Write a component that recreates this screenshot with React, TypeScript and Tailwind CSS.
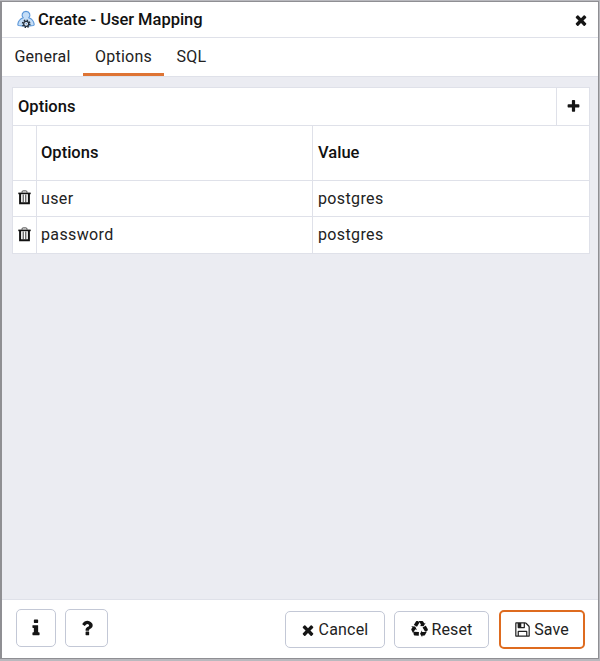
import React from "react";

const TIMES =
  "M1490 1322q0 40-28 68l-136 136q-28 28-68 28t-68-28l-294-294-294 294q-28 28-68 28t-68-28l-136-136q-28-28-28-68t28-68l294-294-294-294q-28-28-28-68t28-68l136-136q28-28 68-28t68 28l294 294 294-294q28-28 68-28t68 28l136 136q28 28 28 68t-28 68l-294 294 294 294q28 28 28 68z";
const PLUS =
  "M1600 736v192q0 40-28 68t-68 28h-416v416q0 40-28 68t-68 28h-192q-40 0-68-28t-28-68v-416h-416q-40 0-68-28t-28-68v-192q0-40 28-68t68-28h416v-416q0-40 28-68t68-28h192q40 0 68 28t28 68v416h416q40 0 68 28t28 68z";
const FLOPPY =
  "M512 1536h768v-384h-768v384zm896 0h128v-896q0-14-10-38.5t-20-34.5l-281-281q-10-10-34-20t-39-10v416q0 40-28 68t-68 28h-576q-40 0-68-28t-28-68v-416h-128v1280h128v-416q0-40 28-68t68-28h832q40 0 68 28t28 68v416zm-384-928v-320q0-13-9.5-22.5t-22.5-9.5h-192q-13 0-22.5 9.5t-9.5 22.5v320q0 13 9.5 22.5t22.5 9.5h192q13 0 22.5-9.5t9.5-22.5zm640 32v928q0 40-28 68t-68 28h-1344q-40 0-68-28t-28-68v-1344q0-40 28-68t68-28h928q40 0 88 20t76 48l280 280q28 28 48 76t20 88z";
const INFO =
  "M1216 1344v128q0 26-19 45t-45 19h-512q-26 0-45-19t-19-45v-128q0-26 19-45t45-19h64v-384h-64q-26 0-45-19t-19-45v-128q0-26 19-45t45-19h384q26 0 45 19t19 45v576h64q26 0 45 19t19 45zm-128-1152v192q0 26-19 45t-45 19h-256q-26 0-45-19t-19-45v-192q0-26 19-45t45-19h256q26 0 45 19t19 45z";
const QUESTION =
  "M1088 1256v240q0 16-12 28t-28 12h-240q-16 0-28-12t-12-28v-240q0-16 12-28t28-12h240q16 0 28 12t12 28zm316-600q0 54-15.5 101t-35 76.5-55 59.5-57.5 43.5-61 35.5q-41 23-68.5 65t-27.5 67q0 17-12 32.5t-28 15.5h-240q-15 0-25.5-18.5t-10.5-37.5v-45q0-83 65-156.5t143-108.5q59-27 84-56t25-76q0-42-46.5-74t-107.5-32q-65 0-108 29-35 25-107 115-13 16-31 16-12 0-25-8l-164-125q-13-10-15.5-25t5.5-28q160-266 464-266 80 0 161 31t146 83 106 127.5 41 158.5z";
const RECYCLE =
  "M836 1169l-15 368-2 22-420-29q-36-3-67-31.5t-47-65.5q-11-27-14.5-55t4-65 12-55 21.5-64 19-53q78 12 509 28zm-387-586l180 379-147-92q-63 72-111.5 144.5t-72.5 125-39.5 94.5-18.5 63l-4 21-190-357q-17-26-18-56t6-47l8-18q35-63 114-188l-140-86zm1231 517l-188 359q-12 29-36.5 46.5t-43.5 20.5l-18 4q-71 7-219 12l8 164-230-367 211-362 7 173q170 16 283 5t170-33zm-785-924q-47 63-265 435l-317-187-19-12 225-356q20-31 60-45t80-10q24 2 48.5 12t42 21 41.5 33 36 34.5 36 39.5 32 35zm655 307l212 363q18 37 12.5 76t-27.5 74q-13 20-33 37t-38 28-48.5 22-47 16-51.5 14-46 12q-34-72-265-436l313-195zm-143-226l142-83-220 373-419-20 151-86q-34-89-75-166t-75.5-123.5-64.5-80-47-46.5l-17-13 405 1q31-3 58 10.5t39 28.5l11 15q39 61 112 190z";

function Icon({ d, className }: { d: string; className: string }) {
  return (
    <svg viewBox="0 0 1792 1792" fill="currentColor" className={`shrink-0 ${className}`}>
      <path d={d} />
    </svg>
  );
}

function UserMappingIcon() {
  return (
    <svg viewBox="0 0 18 18" className="mb-0.5 h-[18px] w-[18px] shrink-0">
      <path
        d="M6.2 7.8C3.3 8.8 1.2 11.4.8 14.4q-.1.9.8 1.1 7.4 1 14.8 0 .9-.2.8-1.1C16.8 11.4 14.7 8.8 11.8 7.8 14 5.4 12.8 1.4 9 1.4S4 5.4 6.2 7.8z"
        fill="#c5def7"
        stroke="#5b96d8"
        strokeWidth="1.1"
      />
      <circle cx="9.2" cy="13.8" r="3.6" fill="none" stroke="#222e3c" strokeWidth="1.5" strokeDasharray="1.4 1.43" />
      <circle cx="9.2" cy="13.8" r="2.5" fill="#eef5fd" stroke="#222e3c" strokeWidth="1.3" />
      <circle cx="9.2" cy="13.8" r=".7" fill="#4f8bd0" />
    </svg>
  );
}

function TrashIcon() {
  return (
    <svg viewBox="0 0 13 15" fill="none" stroke="#111111" className="mb-0.5 h-[15px] w-[13px] shrink-0">
      <path d="M4 2.6V1.9Q4 .9 5.1.9h2.8Q9 .9 9 1.9v.7" stroke="#444444" strokeWidth="1" />
      <path d="M.3 3.4h12.4" strokeWidth="1.6" />
      <path d="M2.1 3.5v9.8h8.8V3.5" strokeWidth="2" />
      <path d="M5.2 4.5v8M7.8 4.5v8" stroke="#333333" strokeWidth="1" />
    </svg>
  );
}

const rows = [
  { option: "user", value: "postgres" },
  { option: "password", value: "postgres" },
];

export default function App() {
  return (
    <div className="h-[661px] w-[600px] bg-[#b9b9be] pt-px font-['Roboto',sans-serif] text-base text-[#222222]">
      <div className="flex h-[658px] w-[599px] flex-col border-y border-r border-l-2 border-[#8f8f93] bg-[#ebecf2]">
        <header className="flex h-9 items-center border-b border-[#dfe1e9] bg-white pr-[9px] pl-[15px]">
          <UserMappingIcon />
          <h1 className="ml-[3px] flex-1 text-[16.5px] leading-6 font-medium tracking-[-0.02px] text-[#111111]">Create - User Mapping</h1>
          <button aria-label="Close"><Icon d={TIMES} className="h-4 w-4 text-[#151515]" /></button>
        </header>
        <nav className="flex h-[39px] border-b border-[#dfe1e9] bg-white tracking-[0.25px]">
          <button className="w-[81px] pb-px">General</button>
          <button className="w-[81px] border-b-[3px] border-[#de7434] pt-0.5">Options</button>
          <button className="w-[55px] pb-px">SQL</button>
        </nav>
        <main className="flex-1 px-[10px] pt-[10px]">
          <section className="w-[578px] border border-[#dfe1e9] bg-white">
            <div className="flex h-[38px] border-b border-[#dfe1e9]">
              <h2 className="flex flex-1 items-center pl-[5px] text-[16.5px] leading-6 font-medium text-[#111111]">Options</h2>
              <button aria-label="Add option" className="flex w-[33px] items-center justify-center border-l border-[#dfe1e9]">
                <Icon d={PLUS} className="h-[15px] w-[15px] text-[#151515]" />
              </button>
            </div>
            <div className="grid h-[55px] grid-cols-[24px_276px_1fr] border-b border-[#dfe1e9] text-[16.5px] leading-6 font-medium text-[#111111]">
              <div className="border-r border-[#dfe1e9]" />
              <div className="flex items-center border-r border-[#dfe1e9] pl-1">Options</div>
              <div className="flex items-center pl-[5px]">Value</div>
            </div>
            {rows.map((row) => (
              <div key={row.option} className="grid h-9 grid-cols-[24px_276px_1fr] border-b border-[#dfe1e9] tracking-[0.37px] last:border-b-0">
                <div className="flex items-center justify-center border-r border-[#dfe1e9]"><TrashIcon /></div>
                <div className="flex items-center border-r border-[#dfe1e9] pl-1">{row.option}</div>
                <div className="flex items-center pl-[5px]">{row.value}</div>
              </div>
            ))}
          </section>
        </main>
        <footer className="flex h-[59px] items-start border-t border-[#dfe1e9] bg-white pr-[13px] pl-[14px]">
          <button aria-label="Info" className="mt-[9px] flex h-[38px] w-10 items-center justify-center rounded-[5px] border border-[#c3c8d6]">
            <Icon d={INFO} className="h-5 w-5 text-[#151515]" />
          </button>
          <button aria-label="Help" className="mt-[9px] ml-[9px] flex h-[38px] w-[43px] items-center justify-center rounded-[5px] border border-[#c3c8d6]">
            <Icon d={QUESTION} className="h-5 w-5 text-[#151515]" />
          </button>
          <div className="flex-1" />
          <button className="mt-[11px] flex h-[37px] w-[100px] items-center justify-center rounded-[5px] border border-[#c3c8d6] pr-0.5">
            <Icon d={TIMES} className="h-4 w-4 text-[#151515]" />
            <span className="ml-[3px] tracking-[0.2px]">Cancel</span>
          </button>
          <button className="mt-[11px] ml-[9px] flex h-[37px] w-[95px] items-center justify-center rounded-[5px] border border-[#c3c8d6]">
            <Icon d={RECYCLE} className="mr-1 mb-px h-[17px] w-[17px] text-[#111111]" />
            <span className="tracking-[0.1px]">Reset</span>
          </button>
          <button className="mt-[10px] ml-[10px] flex h-[39px] w-[86px] items-center justify-center rounded-[5px] border-2 border-[#de6b1f] pr-px">
            <Icon d={FLOPPY} className="mr-[3px] h-[17px] w-[17px] text-[#222222]" />
            <span className="tracking-[0.1px]">Save</span>
          </button>
        </footer>
      </div>
    </div>
  );
}
